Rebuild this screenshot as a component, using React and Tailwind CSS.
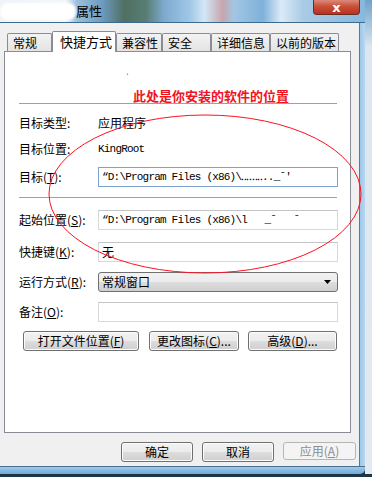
import React from 'react';

const cjk = "font-['Noto_Sans_CJK_SC',sans-serif]";
const mono = "font-['Liberation_Mono',monospace] text-[11px] tracking-[-0.8px]";

// Win7 style button gradient
const btn =
  'h-[20px] flex items-center justify-center rounded-[3px] border border-[#707070] bg-[linear-gradient(#f2f2f2_0%,#ebebeb_50%,#dddddd_51%,#cfcfcf_100%)] text-[12px] leading-none text-black shadow-[inset_0_0_0_1px_#fcfcfc]';

const Tab = ({ label, width, active }) =>
  active ? (
    <div
      className={`relative z-10 -mb-px h-[21px] ${width} border border-b-0 border-[#898c95] bg-white pl-[7px] pt-[2px] text-[13px] leading-[16px] rounded-t-[2px]`}
    >
      {label}
    </div>
  ) : (
    <div
      className={`h-[18px] ${width} border border-b-0 border-[#898c95] bg-[linear-gradient(#f3f3f3,#e3e3e3)] pl-[5px] pt-[1px] text-[12px] leading-[16px] rounded-t-[2px]`}
    >
      {label}
    </div>
  );

const Label = ({ children }) => (
  <div className="w-[79px] text-[12px] leading-none text-black">{children}</div>
);

const Field = ({ children, focused }) => (
  <div
    className={`h-[20px] w-[240px] flex items-center bg-white px-[3px] border ${
      focused ? 'border-[#7da2ce]' : 'border-[#d6d8dc] border-t-[#c2c4c8]'
    }`}
  >
    {children}
  </div>
);

export default function App() {
  return (
    <div className={`relative w-[372px] h-[477px] overflow-hidden bg-[#1e3447] ${cjk}`}>
      <div className="flex h-[474px]">
        {/* window */}
        <div className="w-[365px] flex flex-col rounded-br-[5px] overflow-hidden">
          {/* title bar */}
          <div className="relative h-[23px] border-b border-[#3d6b8f] bg-[linear-gradient(90deg,#eef4fa_0%,#f3f7fb_18%,#9cc0dc_21%,#6d9bc0_28%,#4f7062_34%,#587d73_40%,#7eaad0_45%,#9fc7e6_52%,#d3e7f7_56%,#c7a5ad_61%,#a2c6e3_64%,#7fb1da_72%,#dbeaf7_77%,#a9cbe6_83%,#86b8de_100%)]">
            <div className="absolute left-0 top-[3px] h-[17px] w-[76px] rounded-[8px] bg-white blur-[1px]" />
            <span className="absolute left-[76px] top-[3px] text-[13px] leading-[16px] text-black">属性</span>
            <div className="absolute left-[313px] top-0 h-[15px] w-[47px] rounded-b-[4px] border border-t-0 border-[#6d2b22] bg-[linear-gradient(#dc8a78_0%,#c9503a_45%,#b8321f_100%)] flex items-center justify-center">
              <span className="text-white text-[13px] font-bold leading-none font-['DejaVu_Sans',sans-serif]">x</span>
            </div>
          </div>

          <div className="flex flex-1">
            {/* dialog body */}
            <div className="w-[360px] bg-[#f0f0f0] border-r border-[#5d7893] pl-[4px] pt-[8px]">
              {/* tabs */}
              <div className="flex items-end h-[20px] pl-[3px]">
                <Tab label="常规" width="w-[45px]" />
                <Tab label="快捷方式" width="w-[64px]" active />
                <Tab label="兼容性" width="w-[46px]" />
                <Tab label="安全" width="w-[49px]" />
                <Tab label="详细信息" width="w-[59px]" />
                <Tab label="以前的版本" width="w-[69px]" />
              </div>

              {/* tab panel */}
              <div className="w-[347px] h-[382px] border border-[#898c95] bg-white">
                <div className="relative h-[37px]">
                  <span className="absolute left-[121px] top-[20px] text-[9px] leading-none">ˈ</span>
                </div>
                <div className="h-[14px] pl-[128px] text-[13px] leading-[13px] font-bold text-[#f0141e]">
                  此处是你安装的软件的位置
                </div>
                <div className="ml-[14px] w-[318px] h-px bg-[#a0a0a0]" />

                <div className="ml-[14px] mt-[9px] h-[20px] flex items-center">
                  <Label>目标类型:</Label>
                  <span className="text-[12px] leading-none">应用程序</span>
                </div>
                <div className="ml-[14px] mt-[6px] h-[20px] flex items-center">
                  <Label>目标位置:</Label>
                  <span className={mono}>KingRoot</span>
                </div>
                <div className="ml-[14px] mt-[8px] flex items-center">
                  <Label>
                    目标(<u>T</u>):
                  </Label>
                  <Field focused>
                    <span className={`${mono} whitespace-pre`}>“D:\Program Files (x86)\‥‥‥‥.._ˉ'</span>
                  </Field>
                </div>
                <div className="ml-[14px] mt-[10px] w-[318px] h-px bg-[#a0a0a0]" />

                <div className="ml-[14px] mt-[12px] flex items-center">
                  <Label>
                    起始位置(<u>S</u>):
                  </Label>
                  <Field>
                    <span className={`${mono} whitespace-pre`}>“D:\Program Files (x86)\l   _ˉ   ˉ</span>
                  </Field>
                </div>
                <div className="ml-[14px] mt-[12px] flex items-center">
                  <Label>
                    快捷键(<u>K</u>):
                  </Label>
                  <Field>
                    <span className="text-[12px] leading-none">无</span>
                  </Field>
                </div>
                <div className="ml-[14px] mt-[10px] flex items-center">
                  <Label>
                    运行方式(<u>R</u>):
                  </Label>
                  <div className="h-[20px] w-[240px] flex items-center justify-between rounded-[3px] border border-[#707070] bg-[linear-gradient(#f2f2f2_0%,#ebebeb_50%,#dddddd_51%,#cfcfcf_100%)] pl-[3px] pr-[6px]">
                    <span className="text-[12px] leading-none">常规窗口</span>
                    <svg width="7" height="4" viewBox="0 0 7 4">
                      <path d="M0 0h7L3.5 4z" fill="#000" />
                    </svg>
                  </div>
                </div>
                <div className="ml-[14px] mt-[10px] flex items-center">
                  <Label>
                    备注(<u>O</u>):
                  </Label>
                  <Field />
                </div>

                <div className="ml-[18px] mt-[9px] flex">
                  <div className={`${btn} w-[116px]`}>
                    打开文件位置(<u>F</u>)
                  </div>
                  <div className={`${btn} w-[90px] ml-[10px]`}>
                    更改图标(<u>C</u>)...
                  </div>
                  <div className={`${btn} w-[89px] ml-[9px]`}>
                    高级(<u>D</u>)...
                  </div>
                </div>
              </div>

              {/* dialog buttons */}
              <div className="mt-[9px] flex justify-end gap-[9px] pr-[3px]">
                <div className={`${btn} h-[18px] w-[72px] border-[#3c9ad8] shadow-[inset_0_0_0_1px_#a8dcf7]`}>确定</div>
                <div className={`${btn} h-[18px] w-[72px]`}>取消</div>
                <div className="h-[18px] w-[73px] flex items-center justify-center rounded-[3px] border border-[#b5b5b5] bg-[#f4f4f4] text-[12px] leading-none text-[#8d8d8d]">
                  应用(<u>A</u>)
                </div>
              </div>
            </div>
            {/* right frame */}
            <div className="w-[5px] bg-[linear-gradient(90deg,#9cc8ea,#b7d7f0)]" />
          </div>

          {/* bottom frame */}
          <div className="h-[8px] border-t border-[#4b6d8c] bg-[linear-gradient(#9fcbec,#6ea9d6)]" />
        </div>
        <div className="w-[7px] bg-[linear-gradient(#6fa3cc_0%,#dde6ee_10%,#e3e9ee_100%)]" />
      </div>

      {/* red annotation ellipse */}
      <svg className="absolute left-0 top-0 pointer-events-none" width="372" height="477">
        <ellipse cx="205" cy="194" rx="156" ry="79" fill="none" stroke="#ff1020" strokeWidth="1" />
      </svg>
    </div>
  );
}
